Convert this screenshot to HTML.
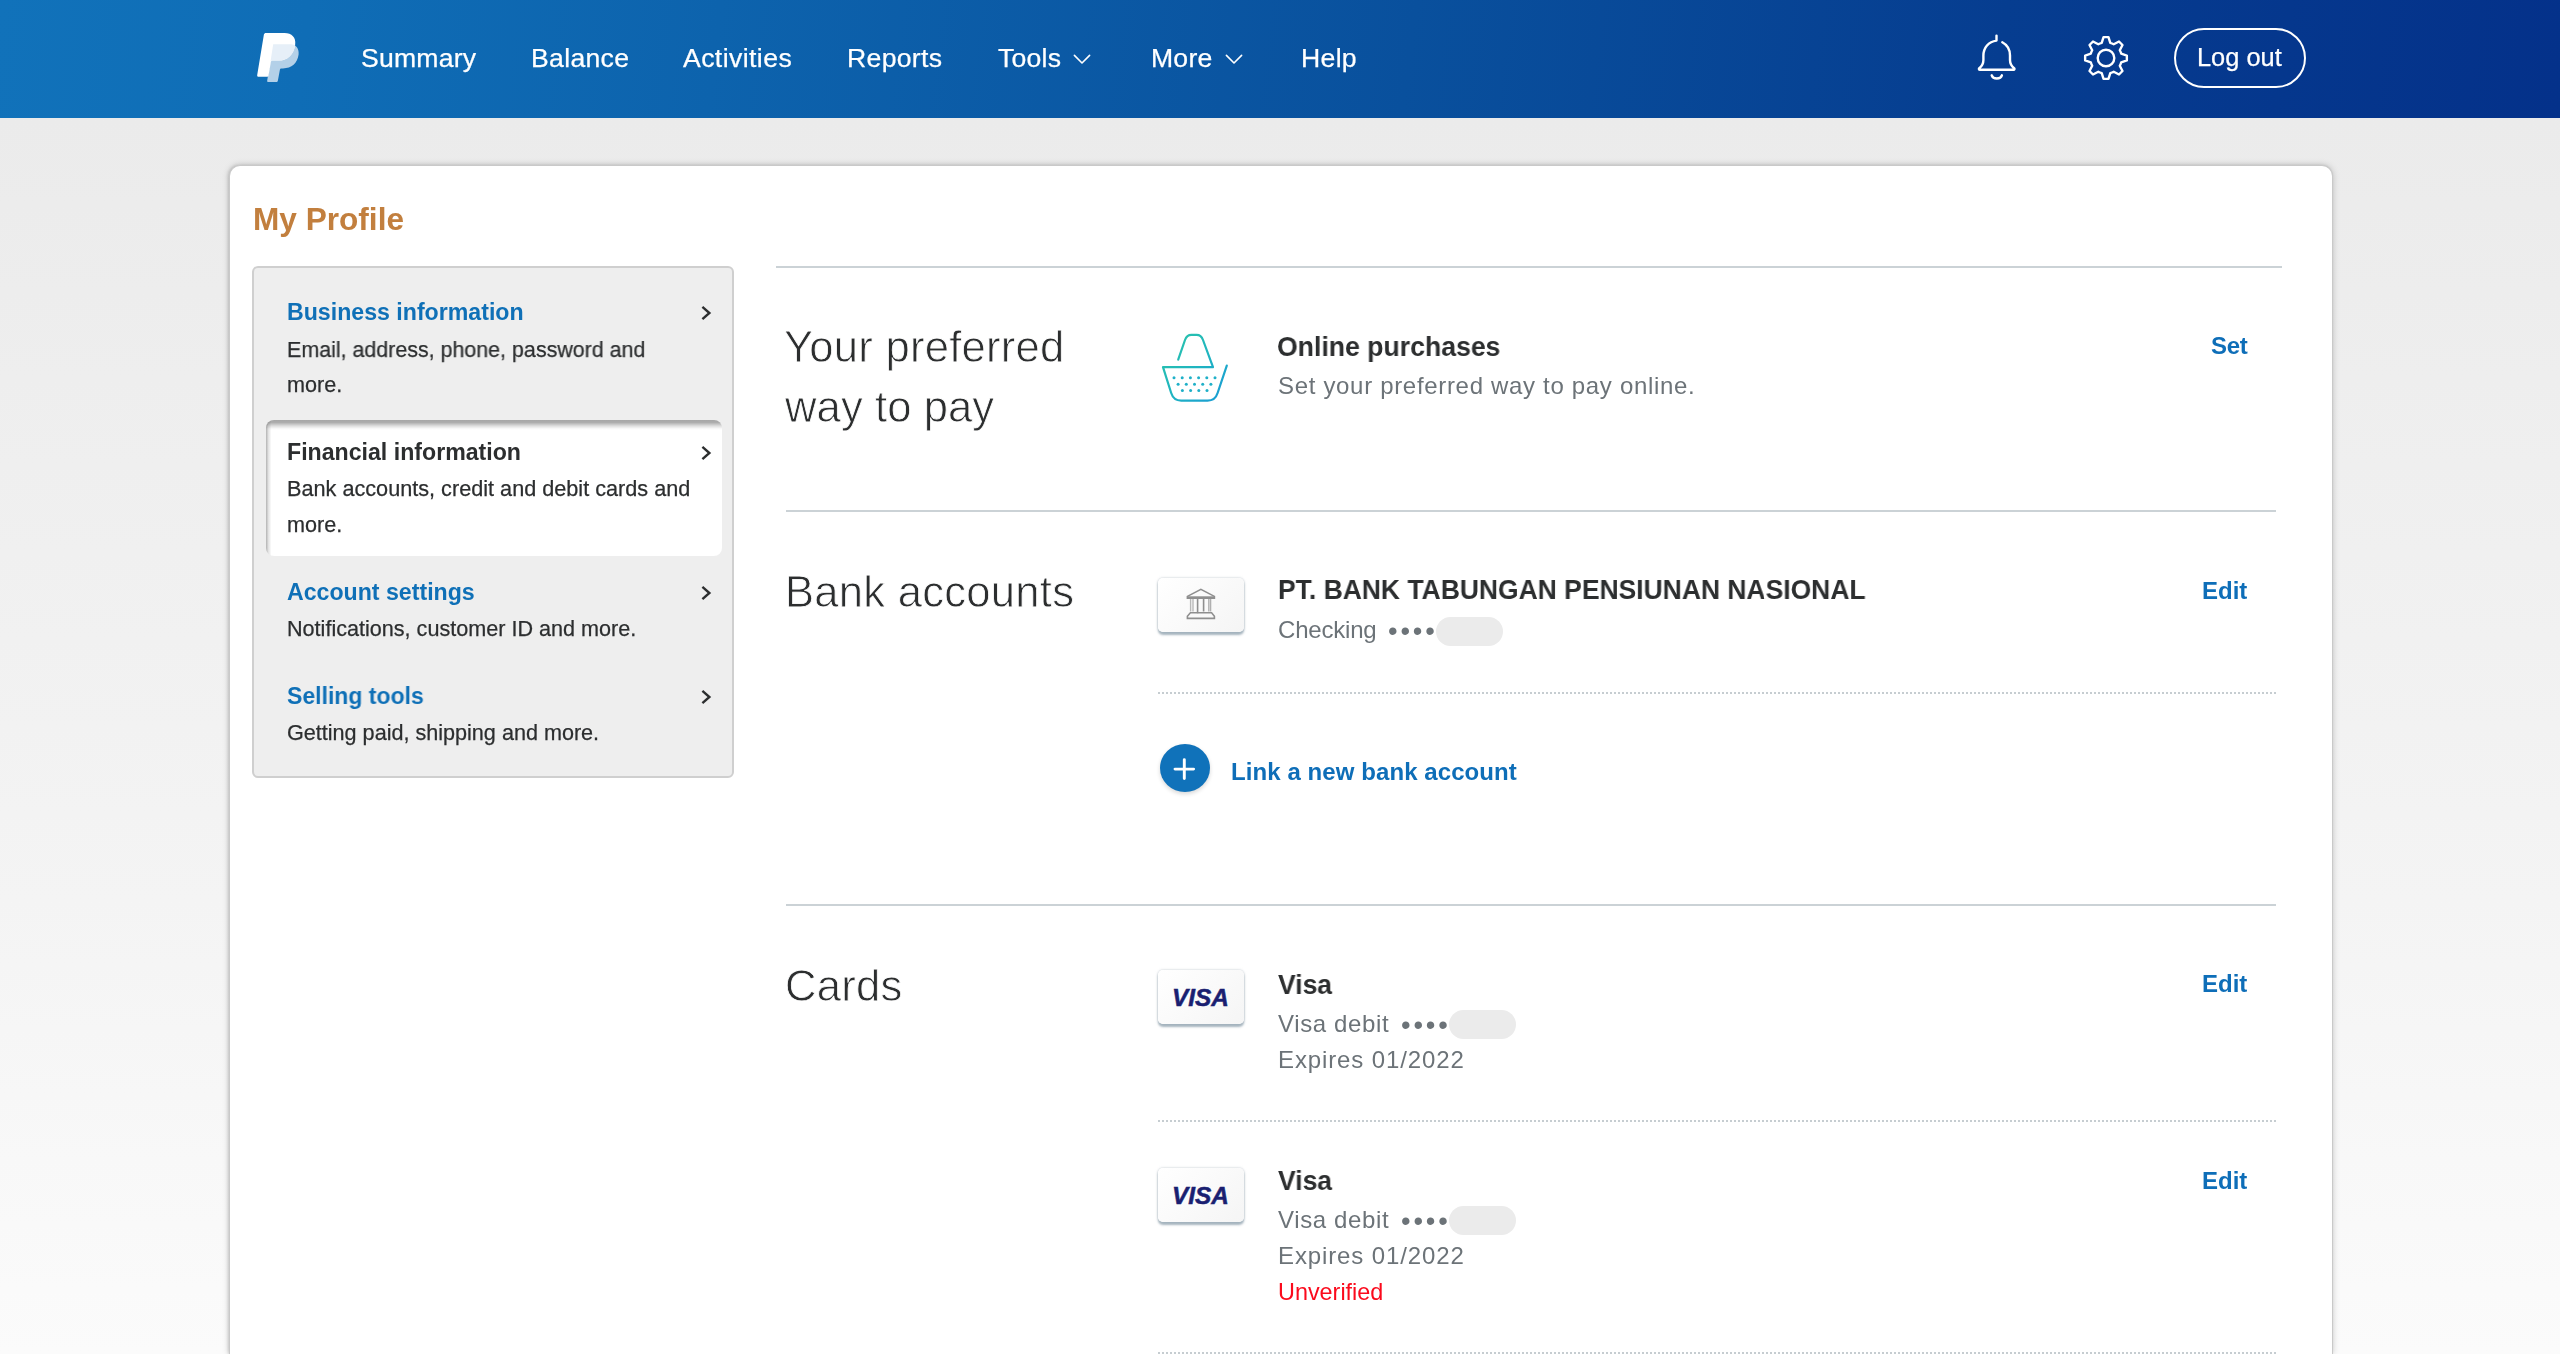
<!DOCTYPE html>
<html lang="en"><head><meta charset="utf-8"><title>PayPal - My Profile</title>
<meta name="viewport" content="width=2560">
<style>
*{box-sizing:border-box;margin:0;padding:0}
html,body{width:2560px;height:1354px;overflow:hidden}
body{position:relative;font-family:"Liberation Sans",Arial,Helvetica,sans-serif;color:#2c2e2f;
 background:linear-gradient(180deg,#ebebeb 0,#ebebeb 118px,#f4f4f4 900px,#fbfbfb 1354px);}
a{color:inherit;text-decoration:none}
.t{position:absolute;display:block;white-space:nowrap;line-height:1;font-weight:normal;will-change:transform;}
svg{position:absolute;overflow:visible}
#hdr{position:absolute;left:0;top:0;width:2560px;height:118px;
 background:linear-gradient(97deg,#1172ba 0%,#0f6db6 12%,#0d63ad 28%,#09509d 55%,#063d90 78%,#04318a 100%);}
#hdr .t{color:#fff}
.nv{-webkit-text-stroke:.25px #fff}
.sd{-webkit-text-stroke:.25px #2c2e2f}
#logout{position:absolute;left:2174px;top:28px;width:132px;height:60px;border:2.5px solid #fff;border-radius:30px;}
#card{position:absolute;left:229px;top:165px;width:2104px;height:1189px;background:#fff;border:1px solid #c9c9c9;border-bottom:0;border-radius:11px 11px 0 0;
 box-shadow:0 0 7px rgba(0,0,0,.18), -1px 0 3px rgba(0,0,0,.12);}
#side{position:absolute;left:252px;top:266px;width:482px;height:512px;background:#eeeeee;border:2px solid #cfcfcf;border-radius:6px;}
#sel{position:absolute;left:265.6px;top:419.6px;width:456px;height:136px;border-radius:8px;
 background:linear-gradient(180deg,rgba(0,0,0,.35) 0,rgba(0,0,0,.32) 2.5px,rgba(0,0,0,.13) 6px,rgba(0,0,0,.03) 8.5px,rgba(0,0,0,0) 10px),linear-gradient(90deg,rgba(0,0,0,.30) 0,rgba(0,0,0,.11) 2.5px,rgba(0,0,0,0) 5.5px),#fff;}
.hl{position:absolute;height:2px;background:#cbd2d6}
.dl{position:absolute;height:0;border-top:2px dotted #c6cdd1}
.h2{color:#2c2e2f;-webkit-text-stroke:.8px #fff;}
.blue{color:#0f70b7}
.lnk{color:#0e6eb8;font-weight:bold}
.gry{color:#6c7378}
.b{font-weight:bold}
.fi{position:absolute;width:86.5px;height:54.4px;border-radius:5px;background:linear-gradient(135deg,#fff 0%,#f5f5f5 100%);
 box-shadow:0 2.2px 2.2px 0 rgba(150,168,180,.85), 0 0 2.5px 0 rgba(150,165,175,.6);}
.pill{position:absolute;background:#ebebeb;border-radius:15px}
#plus{position:absolute;left:1160px;top:744px;width:50px;height:48px;border-radius:50%;background:#1072ba;box-shadow:0 2px 4px rgba(0,0,0,.16)}
.visa{position:absolute;font-weight:bold;font-style:italic;color:#1a1f71;font-size:23.2px;line-height:1;letter-spacing:0;white-space:nowrap;transform-origin:left top;-webkit-text-stroke:.5px #1a1f71}
</style></head><body>
<header id="hdr">
<svg style="left:250px;top:28px" width="60" height="60" viewBox="250 28 60 60">
<path fill="#b3d0e8" d="M273.2 44.3 L291.0 44.3 C296.4 44.9 299.3 49.0 298.6 54.6 C297.5 63.4 291.6 68.4 283.0 68.4 L281.4 68.4 C280.6 68.4 280.1 68.9 279.9 69.7 L277.9 80.6 C277.7 81.6 277.1 82.1 276.1 82.1 L268.6 82.1 C267.5 82.1 267.0 81.4 267.2 80.4 Z"/>
<path fill="#ffffff" d="M266.0 32.9 L284.5 32.9 C291.8 32.9 296.2 37.6 295.2 44.4 C293.9 54.2 287.8 60.6 278.5 60.6 L272.6 60.6 C271.6 60.6 271.1 61.1 270.9 62.0 L268.6 75.3 C268.4 76.3 267.8 76.8 266.8 76.8 L258.6 76.8 C257.5 76.8 257.0 76.0 257.2 75.0 L263.9 34.6 C264.1 33.5 264.9 32.9 266.0 32.9 Z"/>
<path fill="#e6eff8" d="M273.2 44.3 L291.0 44.3 C293.0 44.5 294.3 45.0 295.2 45.6 C293.6 54.8 287.6 60.6 278.5 60.6 L272.6 60.6 C271.6 60.6 271.1 61.1 270.9 62.0 L270.6 61.0 Z"/>
</svg>
<a href="#" class="t nv" style="top:45.38px;font-size:26.6px;left:361px;letter-spacing:0.22px;">Summary</a>
<a href="#" class="t nv" style="top:45.38px;font-size:26.6px;left:531px;letter-spacing:0.32px;">Balance</a>
<a href="#" class="t nv" style="top:45.38px;font-size:26.6px;left:683px;letter-spacing:0.42px;">Activities</a>
<a href="#" class="t nv" style="top:45.38px;font-size:26.6px;left:847px;letter-spacing:0.32px;">Reports</a>
<a href="#" class="t nv" style="top:45.38px;font-size:26.6px;left:998px;letter-spacing:0.22px;">Tools</a>
<a href="#" class="t nv" style="top:45.38px;font-size:26.6px;left:1151px;letter-spacing:0.22px;">More</a>
<a href="#" class="t nv" style="top:45.38px;font-size:26.6px;left:1301px;letter-spacing:0.32px;">Help</a>
<svg style="left:1070.2px;top:47px" width="24" height="24" viewBox="-12 -12 24 24"><path d="M-7.6 -3.6 L0 4.0 L7.6 -3.6" fill="none" stroke="#fff" stroke-width="1.6" stroke-linecap="round" stroke-linejoin="round"/></svg>
<svg style="left:1222.2px;top:47px" width="24" height="24" viewBox="-12 -12 24 24"><path d="M-7.6 -3.6 L0 4.0 L7.6 -3.6" fill="none" stroke="#fff" stroke-width="1.6" stroke-linecap="round" stroke-linejoin="round"/></svg>
<svg style="left:1970px;top:28px" width="56" height="60" viewBox="1970 28 56 60" fill="none" stroke="#fff" stroke-width="2.4" stroke-linecap="round" stroke-linejoin="round">
<path d="M1996.5 35.6 L1996.5 40.6 C1988.6 41.6 1983.4 47.6 1983.4 55.6 L1983.4 60.0 C1983.4 64.0 1981.6 66.4 1979.3 68.2 C1978.6 68.9 1978.9 69.8 1979.9 69.8 L2013.5 69.8 C2014.5 69.8 2014.8 68.9 2014.1 68.2 C2011.8 66.4 2010.0 64.0 2010.0 60.0 L2010.0 55.6 C2010.0 49.6 2007.2 44.9 2002.3 42.3"/>
<path d="M1991.7 75.3 C1993.0 79.6 2000.6 79.6 2001.9 75.3"/>
</svg>
<svg style="left:2080px;top:32px" width="52" height="52" viewBox="2080 32 52 52" fill="none" stroke="#fff" stroke-width="2.4" stroke-linejoin="round"><path d="M2101.71 42.79 L2103.53 37.15 L2108.47 37.15 L2110.29 42.79 A15.8 15.8 0 0 1 2113.72 44.21 L2119.00 41.51 L2122.49 45.00 L2119.79 50.28 A15.8 15.8 0 0 1 2121.21 53.71 L2126.85 55.53 L2126.85 60.47 L2121.21 62.29 A15.8 15.8 0 0 1 2119.79 65.72 L2122.49 71.00 L2119.00 74.49 L2113.72 71.79 A15.8 15.8 0 0 1 2110.29 73.21 L2108.47 78.85 L2103.53 78.85 L2101.71 73.21 A15.8 15.8 0 0 1 2098.28 71.79 L2093.00 74.49 L2089.51 71.00 L2092.21 65.72 A15.8 15.8 0 0 1 2090.79 62.29 L2085.15 60.47 L2085.15 55.53 L2090.79 53.71 A15.8 15.8 0 0 1 2092.21 50.28 L2089.51 45.00 L2093.00 41.51 L2098.28 44.21 A15.8 15.8 0 0 1 2101.71 42.79 Z"/><circle cx="2106" cy="58" r="8.3"/></svg>
<div id="logout"></div>
<a href="#" class="t nv" style="top:45.10px;font-size:25.4px;left:2196.8px;">Log out</a>
</header>
<main><div id="card"></div>
<h1 class="t b" style="top:204.25px;font-size:31.6px;left:253px;color:#c27f3e;">My Profile</h1>
<div id="side"></div><div id="sel"></div><nav>
<a href="#" class="t b blue" style="top:301.00px;font-size:23.15px;left:287px;">Business information</a>
<p class="t sd" style="top:338.72px;font-size:21.6px;left:287px;transform:scaleX(0.992);transform-origin:left center;">Email, address, phone, password and</p>
<p class="t sd" style="top:374.32px;font-size:21.6px;left:287px;">more.</p>
<a href="#" class="t b" style="top:441.20px;font-size:23.15px;left:287px;">Financial information</a>
<p class="t sd" style="top:478.12px;font-size:21.6px;left:287px;transform:scaleX(1.003);transform-origin:left center;">Bank accounts, credit and debit cards and</p>
<p class="t sd" style="top:514.12px;font-size:21.6px;left:287px;">more.</p>
<a href="#" class="t b blue" style="top:581.40px;font-size:23.15px;left:287px;">Account settings</a>
<p class="t sd" style="top:618.12px;font-size:21.6px;left:287px;">Notifications, customer ID and more.</p>
<a href="#" class="t b blue" style="top:685.40px;font-size:23.15px;left:287px;transform:scaleX(0.994);transform-origin:left center;">Selling tools</a>
<p class="t sd" style="top:722.12px;font-size:21.6px;left:287px;">Getting paid, shipping and more.</p>
</nav>
<svg style="left:696px;top:301px" width="20" height="24" viewBox="-10 -12 20 24"><path d="M-3.6 -6.2 L3.4 0 L-3.6 6.2" fill="none" stroke="#2c2e2f" stroke-width="2.4" stroke-linecap="butt" stroke-linejoin="miter"/></svg>
<svg style="left:696px;top:441px" width="20" height="24" viewBox="-10 -12 20 24"><path d="M-3.6 -6.2 L3.4 0 L-3.6 6.2" fill="none" stroke="#2c2e2f" stroke-width="2.4" stroke-linecap="butt" stroke-linejoin="miter"/></svg>
<svg style="left:696px;top:581px" width="20" height="24" viewBox="-10 -12 20 24"><path d="M-3.6 -6.2 L3.4 0 L-3.6 6.2" fill="none" stroke="#2c2e2f" stroke-width="2.4" stroke-linecap="butt" stroke-linejoin="miter"/></svg>
<svg style="left:696px;top:685px" width="20" height="24" viewBox="-10 -12 20 24"><path d="M-3.6 -6.2 L3.4 0 L-3.6 6.2" fill="none" stroke="#2c2e2f" stroke-width="2.4" stroke-linecap="butt" stroke-linejoin="miter"/></svg>
<div class="hl" style="left:776px;top:266px;width:1506px"></div>
<div class="hl" style="left:786px;top:510px;width:1490px"></div>
<div class="hl" style="left:786px;top:904px;width:1490px"></div>
<div class="dl" style="left:1158px;top:691.5px;width:1118px"></div>
<div class="dl" style="left:1158px;top:1120px;width:1118px"></div>
<div class="dl" style="left:1158px;top:1352px;width:1118px"></div>
<h2 class="t h2" style="top:326.39px;font-size:43.6px;left:784px;letter-spacing:0.25px;">Your preferred</h2>
<h2 class="t h2" style="top:386.39px;font-size:43.6px;left:785px;letter-spacing:0.08px;">way to pay</h2>
<h2 class="t h2" style="top:570.69px;font-size:43.6px;left:784.8px;letter-spacing:0.25px;">Bank accounts</h2>
<h2 class="t h2" style="top:964.99px;font-size:43.6px;left:784.8px;letter-spacing:0.25px;">Cards</h2>
<svg style="left:1155px;top:328px" width="80" height="80" viewBox="1155 328 80 80" fill="none">
<defs><linearGradient id="bg" x1="0" y1="0" x2="1" y2="1"><stop offset="0" stop-color="#2cc6a6"/><stop offset=".5" stop-color="#1fb5c0"/><stop offset="1" stop-color="#1a9ad6"/></linearGradient></defs>
<path stroke="url(#bg)" stroke-width="2.2" stroke-linecap="round" stroke-linejoin="round" d="M1178.2 359.6 L1185.0 340.0 C1186.2 336.6 1188.2 334.9 1191.4 334.9 L1196.6 334.9 C1199.8 334.9 1201.8 336.6 1203.0 340.0 L1213.0 367.2 L1163.0 367.2 L1171.2 393.0 C1172.8 398.2 1176.0 400.6 1181.2 400.6 L1207.6 400.6 C1212.8 400.6 1216.0 398.2 1217.6 393.0 L1226.8 365.6"/>
<g fill="#1fb0c8"><circle cx="1174" cy="377.8" r="1.5"/><circle cx="1182.2" cy="377.8" r="1.5"/><circle cx="1190.4" cy="377.8" r="1.5"/><circle cx="1198.6" cy="377.8" r="1.5"/><circle cx="1206.8" cy="377.8" r="1.5"/><circle cx="1215" cy="377.8" r="1.5"/><circle cx="1178.1" cy="384.2" r="1.5"/><circle cx="1186.3" cy="384.2" r="1.5"/><circle cx="1194.5" cy="384.2" r="1.5"/><circle cx="1202.7" cy="384.2" r="1.5"/><circle cx="1210.9" cy="384.2" r="1.5"/><circle cx="1182.4" cy="390.6" r="1.5"/><circle cx="1190.6" cy="390.6" r="1.5"/><circle cx="1198.8" cy="390.6" r="1.5"/><circle cx="1207.0" cy="390.6" r="1.5"/></g></svg>
<div class="t b" style="top:333.01px;font-size:27.4px;left:1277.2px;transform:scaleX(0.972);transform-origin:left center;">Online purchases</div>
<p class="t gry" style="top:373.88px;font-size:24.0px;left:1277.5px;letter-spacing:0.68px;">Set your preferred way to pay online.</p>
<a href="#" class="t lnk" style="top:333.58px;font-size:24.0px;right:312.4px;letter-spacing:-0.30px;">Set</a>
<div class="fi" style="left:1157.7px;top:577.7px"></div>
<svg style="left:1184px;top:586px" width="34" height="36" viewBox="1184 586 34 36" fill="none" stroke="#8f8f8f" stroke-width="1.6" stroke-linejoin="miter">
<path d="M1187.4 598.2 L1187.4 596.4 L1200.9 589.4 L1214.4 596.4 L1214.4 598.2 Z"/><path d="M1187.4 597.4 L1214.4 597.4" stroke-width="2.2"/>
<path d="M1190.6 599 L1190.6 611.6 M1193.0 599 L1193.0 611.6" stroke="#b9b9b9" stroke-width="1.4"/>
<path d="M1197.6 599 L1197.6 613.2 M1203.6 599 L1203.6 611.4"/>
<path d="M1208.8 599 L1208.8 611.6 M1210.6 599 L1210.6 611.6" stroke="#b0b0b0" stroke-width="1.4"/>
<path d="M1190.4 612.8 L1211.6 612.8 L1214.4 616.2 L1214.4 618.4 L1187.4 618.4 L1187.4 616.2 Z"/>
</svg>
<div class="t b" style="top:576.27px;font-size:27.8px;left:1278.2px;transform:scaleX(0.952);transform-origin:left center;">PT. BANK TABUNGAN PENSIUNAN NASIONAL</div>
<p class="t gry" style="top:618.08px;font-size:24.0px;left:1277.8px;letter-spacing:-0.20px;">Checking</p>
<span class="t gry" style="left:1387.70px;top:617.09px;font-size:27.4px;letter-spacing:2.81px">••••</span>
<div class="pill" style="left:1436px;top:617px;width:66.5px;height:28.6px"></div>
<a href="#" class="t lnk" style="top:579.48px;font-size:24.0px;right:312.4px;">Edit</a>
<div id="plus"><svg style="left:0;top:0" width="50" height="48" viewBox="0 0 50 48"><path d="M15.0 25.1 H33.6 M24.3 15.6 V34.6" stroke="#fff" stroke-width="2.9" stroke-linecap="round" fill="none"/></svg></div>
<a href="#" class="t lnk" style="top:759.68px;font-size:24.0px;left:1231.4px;letter-spacing:0.08px;">Link a new bank account</a>
<div class="fi" style="left:1157.7px;top:969.7px"></div>
<div class="visa" style="left:1172.2px;top:986.7px;transform:scale(1.05,1.0)">VISA</div>
<div class="t b" style="top:970.61px;font-size:27.4px;left:1277.6px;transform:scaleX(0.968);transform-origin:left center;">Visa</div>
<p class="t gry" style="top:1011.88px;font-size:24.0px;left:1277.6px;letter-spacing:0.62px;">Visa debit</p>
<span class="t gry" style="left:1400.50px;top:1010.99px;font-size:27.4px;letter-spacing:2.81px">••••</span>
<div class="pill" style="left:1449px;top:1009.6px;width:67px;height:29px"></div>
<p class="t gry" style="top:1047.88px;font-size:24.0px;left:1278.2px;letter-spacing:0.88px;">Expires 01/2022</p>
<a href="#" class="t lnk" style="top:971.58px;font-size:24.0px;right:312.4px;">Edit</a>
<div class="fi" style="left:1157.7px;top:1167.7px"></div>
<div class="visa" style="left:1172.2px;top:1184.7px;transform:scale(1.05,1.0)">VISA</div>
<div class="t b" style="top:1166.61px;font-size:27.4px;left:1277.6px;transform:scaleX(0.968);transform-origin:left center;">Visa</div>
<p class="t gry" style="top:1207.88px;font-size:24.0px;left:1277.6px;letter-spacing:0.62px;">Visa debit</p>
<span class="t gry" style="left:1400.50px;top:1206.99px;font-size:27.4px;letter-spacing:2.81px">••••</span>
<div class="pill" style="left:1449px;top:1205.6px;width:67px;height:29px"></div>
<p class="t gry" style="top:1243.88px;font-size:24.0px;left:1278.2px;letter-spacing:0.88px;">Expires 01/2022</p>
<div class="t" style="top:1280.79px;font-size:23.4px;left:1278.2px;color:#fb0a1c;">Unverified</div>
<a href="#" class="t lnk" style="top:1169.18px;font-size:24.0px;right:312.4px;">Edit</a>
</main></body></html>
